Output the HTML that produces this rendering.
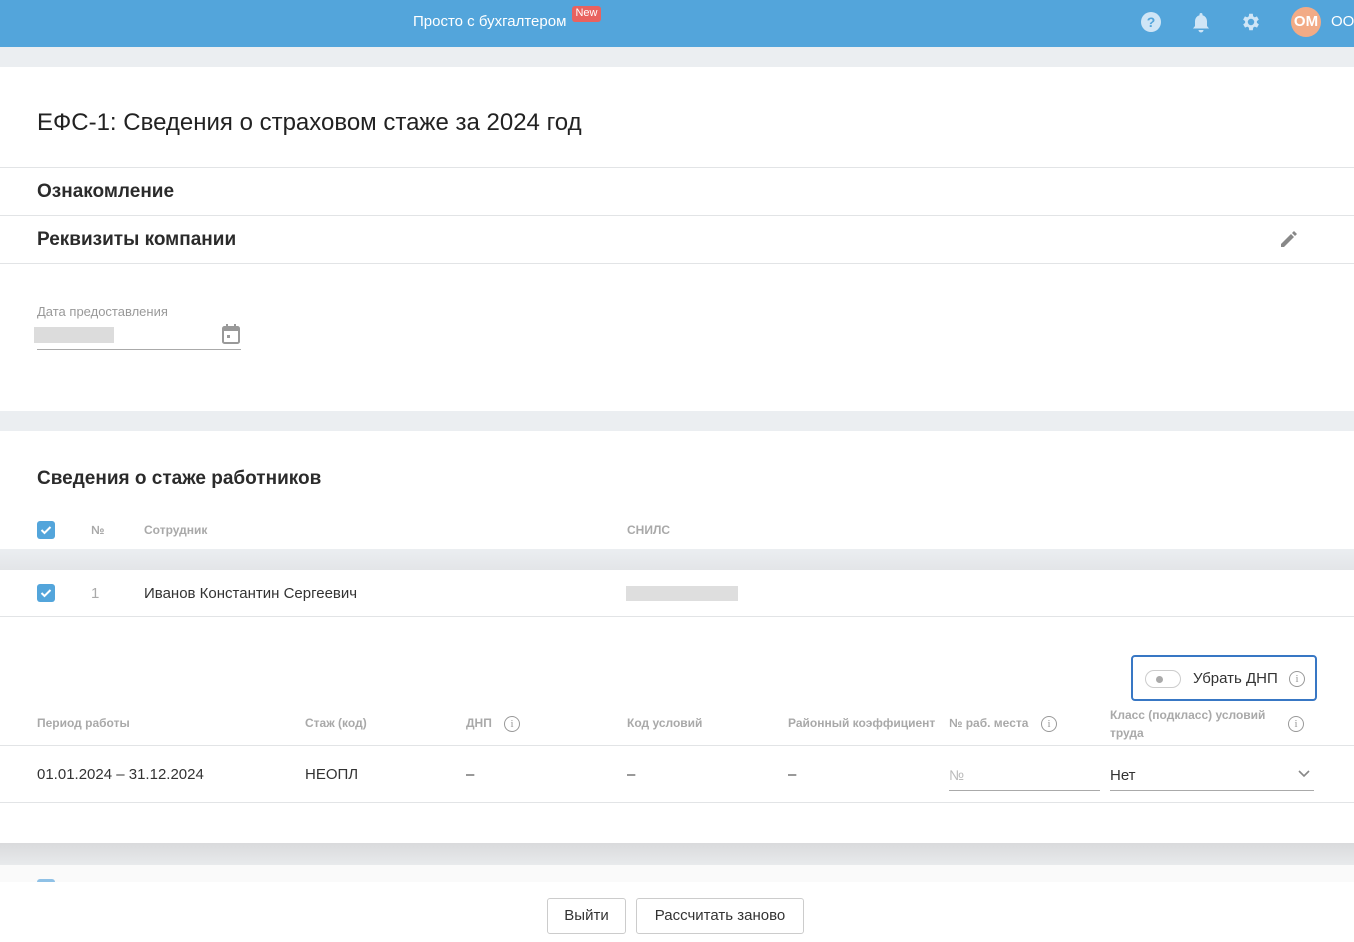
<!DOCTYPE html>
<html><head><meta charset="utf-8"><style>
*{box-sizing:border-box;margin:0;padding:0}
body{width:1354px;height:942px;overflow:hidden;background:#ebeef1;font-family:"Liberation Sans",sans-serif;color:#333;position:relative}
.a{position:absolute}
.hdr{left:0;top:0;width:1354px;height:47px;background:#53a5db}
.card{left:0;width:1354px;background:#fff}
.line{left:0;width:1354px;height:1px;background:#e2e4e6}
.h2{font-size:19px;font-weight:bold;color:#2b2b2b}
.th{font-size:12px;font-weight:bold;color:#a9a9a9}
.info{width:16px;height:16px;border:1.3px solid #999;border-radius:50%;font-size:11px;color:#999;text-align:center;line-height:14px;font-family:"Liberation Serif",serif}
.btn{top:898px;height:36px;border:1px solid #ccc;border-radius:3px;background:#fff;font-size:15px;text-align:center;line-height:34px;color:#333}
</style></head><body>
<div class="a hdr"></div>
<div class="a" style="left:413px;top:13px;color:#fff;font-size:15px">Просто с бухгалтером</div>
<div class="a" style="left:572px;top:6px;width:29px;height:16px;background:#e9625f;border-radius:3px;color:#fff;font-size:11px;text-align:center;line-height:15px">New</div>
<svg class="a" style="left:1140px;top:11px" width="22" height="22"><circle cx="11" cy="11" r="10" fill="#cfe5f6"/><text x="11" y="16" font-size="14" font-weight="bold" fill="#53a5db" text-anchor="middle" font-family="Liberation Sans">?</text></svg>
<svg class="a" style="left:1191px;top:11px" width="20" height="22"><path d="M10 2a1.5 1.5 0 0 1 1.5 1.5v.7A6 6 0 0 1 16 10v5l2 2.5H2L4 15v-5a6 6 0 0 1 4.5-5.8v-.7A1.5 1.5 0 0 1 10 2zM7.5 19h5a2.5 2.5 0 0 1-5 0z" fill="#cfe5f6"/></svg>
<svg class="a" style="left:1240px;top:11px" width="22" height="22" viewBox="0 0 24 24"><path fill="#cfe5f6" d="M19.4 13a7.5 7.5 0 0 0 0-2l2.1-1.6-2-3.5-2.5 1a7 7 0 0 0-1.7-1L15 3h-4l-.4 2.9a7 7 0 0 0-1.7 1l-2.5-1-2 3.5L6.6 11a7.5 7.5 0 0 0 0 2l-2.1 1.6 2 3.5 2.5-1a7 7 0 0 0 1.7 1L11 21h4l.4-2.9a7 7 0 0 0 1.7-1l2.5 1 2-3.5zM13 15.5A3.5 3.5 0 1 1 13 8.5a3.5 3.5 0 0 1 0 7z" transform="translate(-1 0)"/></svg>
<div class="a" style="left:1291px;top:7px;width:30px;height:30px;border-radius:50%;background:#f2ab86;color:#fff;font-weight:bold;font-size:15px;text-align:center;line-height:30px">OM</div>
<div class="a" style="left:1331px;top:13px;color:#fff;font-size:15px">ООО</div>

<div class="a card" style="top:67px;height:344px"></div>
<div class="a" style="left:37px;top:109px;font-size:24px;color:#222">ЕФС-1: Сведения о страховом стаже за 2024 год</div>
<div class="a line" style="top:167px"></div>
<div class="a h2" style="left:37px;top:181px">Ознакомление</div>
<div class="a line" style="top:215px"></div>
<div class="a h2" style="left:37px;top:229px">Реквизиты компании</div>
<svg class="a" style="left:1279px;top:229px" width="20" height="20"><path d="M2 15l10-10 3 3-10 10H2zM13 4l2-2 3 3-2 2z" fill="#888"/></svg>
<div class="a line" style="top:263px"></div>
<div class="a" style="left:37px;top:304px;font-size:13px;color:#999">Дата предоставления</div>
<div class="a" style="left:34px;top:327px;width:80px;height:16px;background:#dcdcdc"></div>
<svg class="a" style="left:221px;top:323px" width="20" height="22"><rect x="2" y="4" width="16" height="16" rx="1.5" fill="none" stroke="#999" stroke-width="2"/><rect x="2" y="4" width="16" height="4" fill="#999"/><rect x="5" y="1" width="2" height="4" fill="#999"/><rect x="13" y="1" width="2" height="4" fill="#999"/><rect x="6" y="12" width="3" height="3" fill="#999"/></svg>
<div class="a" style="left:37px;top:349px;width:204px;height:1px;background:#aaa"></div>

<div class="a card" style="top:431px;height:118px"></div>
<div class="a h2" style="left:37px;top:468px">Сведения о стаже работников</div>
<svg class="a" style="left:37px;top:521px" width="18" height="18"><rect width="18" height="18" rx="3" fill="#53a5db"/><path d="M4.5 9l3 3 6-6" stroke="#fff" stroke-width="2" fill="none"/></svg>
<div class="a th" style="left:91px;top:523px">№</div>
<div class="a th" style="left:144px;top:523px">Сотрудник</div>
<div class="a th" style="left:627px;top:523px">СНИЛС</div>
<div class="a" style="left:0;top:549px;width:1354px;height:21px;background:linear-gradient(#ebeef1,#e3e5e8)"></div>

<div class="a card" style="top:570px;height:273px"></div>
<svg class="a" style="left:37px;top:584px" width="18" height="18"><rect width="18" height="18" rx="3" fill="#53a5db"/><path d="M4.5 9l3 3 6-6" stroke="#fff" stroke-width="2" fill="none"/></svg>
<div class="a" style="left:91px;top:585px;font-size:15px;color:#aaa">1</div>
<div class="a" style="left:144px;top:585px;font-size:15px;color:#333">Иванов Константин Сергеевич</div>
<div class="a" style="left:626px;top:586px;width:112px;height:15px;background:#dedede"></div>
<div class="a line" style="top:616px"></div>
<div class="a" style="left:1131px;top:655px;width:186px;height:46px;border:2px solid #3877c4;border-radius:4px"></div>
<div class="a" style="left:1145px;top:670px;width:36px;height:18px;border:1px solid #ccc;border-radius:9px"><div class="a" style="left:10px;top:5px;width:7px;height:7px;border-radius:50%;background:#aaa"></div></div>
<div class="a" style="left:1193px;top:670px;font-size:15px">Убрать ДНП</div>
<div class="a info" style="left:1289px;top:671px">i</div>
<div class="a th" style="left:37px;top:716px">Период работы</div>
<div class="a th" style="left:305px;top:716px">Стаж (код)</div>
<div class="a th" style="left:466px;top:716px">ДНП</div>
<div class="a info" style="left:504px;top:716px">i</div>
<div class="a th" style="left:627px;top:716px">Код условий</div>
<div class="a th" style="left:788px;top:716px">Районный коэффициент</div>
<div class="a th" style="left:949px;top:716px">№ раб. места</div>
<div class="a info" style="left:1041px;top:716px">i</div>
<div class="a th" style="left:1110px;top:706px;line-height:18px">Класс (подкласс) условий<br>труда</div>
<div class="a info" style="left:1288px;top:716px">i</div>
<div class="a line" style="top:745px"></div>
<div class="a" style="left:37px;top:766px;font-size:15px">01.01.2024 – 31.12.2024</div>
<div class="a" style="left:305px;top:766px;font-size:15px">НЕОПЛ</div>
<div class="a" style="left:466px;top:766px;font-size:15px">–</div>
<div class="a" style="left:627px;top:766px;font-size:15px">–</div>
<div class="a" style="left:788px;top:766px;font-size:15px">–</div>
<div class="a" style="left:949px;top:767px;font-size:14px;color:#bbb">№</div>
<div class="a" style="left:949px;top:790px;width:151px;height:1px;background:#aaa"></div>
<div class="a" style="left:1110px;top:767px;font-size:15px">Нет</div>
<svg class="a" style="left:1298px;top:770px" width="12" height="8"><path d="M1 1l5 5 5-5" stroke="#888" stroke-width="1.6" fill="none"/></svg>
<div class="a" style="left:1110px;top:790px;width:204px;height:1px;background:#aaa"></div>
<div class="a line" style="top:802px"></div>
<div class="a" style="left:0;top:843px;width:1354px;height:22px;background:linear-gradient(#d9dadc,#e8eaec)"></div>
<div class="a" style="left:0;top:865px;width:1354px;height:17px;background:#fafafa"></div>
<div class="a" style="left:37px;top:879px;width:18px;height:4px;border-radius:3px 3px 0 0;background:#8fc1e6"></div>
<div class="a" style="left:0;top:882px;width:1354px;height:60px;background:#fff"></div>
<div class="a btn" style="left:547px;width:79px">Выйти</div>
<div class="a btn" style="left:636px;width:168px">Рассчитать заново</div>
</body></html>
